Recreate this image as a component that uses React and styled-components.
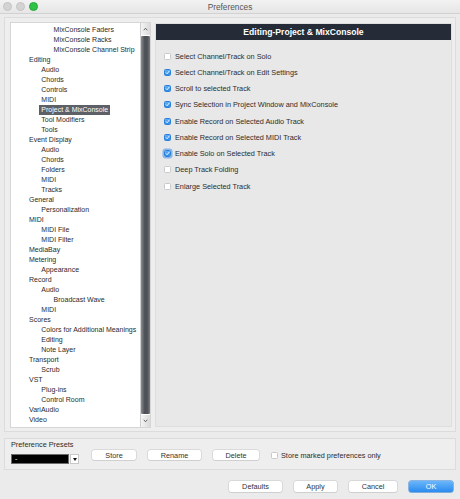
import React from "react";
import styled, { createGlobalStyle } from "styled-components";

const Global = createGlobalStyle`
  html, body { margin: 0; padding: 0; background: #ebebeb; }
  body { font-family: "Liberation Sans", Arial, sans-serif; }
  * { box-sizing: border-box; }
`;

const Window = styled.div`
  width: 460px;
  height: 499px;
  background: #ebebeb;
  display: flex;
  flex-direction: column;
  overflow: hidden;
  color: #2a2a2a;
`;

const TitleBar = styled.div`
  height: 14px;
  flex: none;
  position: relative;
  display: flex;
  align-items: center;
  justify-content: center;
  background: linear-gradient(#f2f2f2, #e6e6e6);
  border-bottom: 1px solid #d2d2d2;
`;

const Lights = styled.div`
  position: absolute;
  left: 3px;
  top: 2px;
  display: flex;
  gap: 4px;
`;

const Light = styled.span`
  width: 9px;
  height: 9px;
  border-radius: 50%;
  background: ${(p) => p.$c};
  border: 1px solid ${(p) => p.$b};
`;

const Title = styled.div`
  font-size: 8.3px;
  color: #555555;
  line-height: 10px;
`;

const MainFrame = styled.div`
  margin: 3px 4px 0;
  padding: 4px 3px 3px 5px;
  border: 1px solid #dcdcdc;
  background: #eeeeee;
  display: flex;
  gap: 4px;
  align-items: flex-start;
`;

const TreeBox = styled.div`
  display: flex;
  width: 141px;
  height: 406px;
  flex: none;
  border: 1px solid #d6d6d6;
  background: #ffffff;
`;

const TreeList = styled.div`
  flex: 1;
  padding-top: 2px;
  overflow: hidden;
`;

const TreeRow = styled.div`
  height: 10px;
  line-height: 10px;
  font-size: 7px;
  white-space: nowrap;
  padding-left: ${(p) => 18 + p.$level * 12.3}px;
`;

const TreeLabel = styled.span`
  display: inline-block;
  padding: 0 ${(p) => (p.$sel ? 2 : 0)}px;
  margin-left: ${(p) => (p.$sel ? -2 : 0)}px;
  background: ${(p) => (p.$sel ? "#5d6066" : "transparent")};
  color: ${(p) => (p.$sel ? "#ffffff" : "#2a2a2a")};
`;

const ScrollBar = styled.div`
  width: 10px;
  flex: none;
  display: flex;
  flex-direction: column;
  border-left: 1px solid #cfcfcf;
`;

const ScrollArrow = styled.div`
  height: 12px;
  flex: none;
  background: linear-gradient(90deg, #f4f4f4, #dadada);
  display: flex;
  align-items: center;
  justify-content: center;
`;

const ScrollThumb = styled.div`
  flex: 1;
  margin: 1px 0;
  background: linear-gradient(90deg, #8a8d92, #4e5258 40%, #4e5258 70%, #7a7d82);
  border-radius: 1px;
`;

const RightPanel = styled.div`
  width: 297px;
  height: 404px;
  margin-top: 1px;
  flex: none;
  display: flex;
  flex-direction: column;
  background: #e8e8e8;
  border: 1px solid #dedede;
`;

const Header = styled.div`
  height: 16px;
  flex: none;
  background: #252c38;
  color: #ffffff;
  font-weight: bold;
  font-size: 8.6px;
  display: flex;
  align-items: center;
  justify-content: center;
`;

const OptionList = styled.div`
  padding: 8px 0 0 8px;
  display: flex;
  flex-direction: column;
`;

const Option = styled.label`
  height: 16.25px;
  display: flex;
  align-items: center;
  gap: 4px;
  font-size: 7.3px;
  color: #2c2c2c;
`;

const Box = styled.span`
  width: 7px;
  height: 7px;
  flex: none;
  border-radius: 1.5px;
  display: flex;
  align-items: center;
  justify-content: center;
  background: ${(p) => (p.$on ? "linear-gradient(#5fb0f7, #2d8bea)" : "#ffffff")};
  border: 1px solid ${(p) => (p.$on ? "#2a7fd8" : "#c9c9c9")};
  box-shadow: ${(p) => (p.$focus ? "0 0 0 1.5px rgba(95,160,240,0.7)" : "none")};
`;

const Bottom = styled.div`
  margin: 6px 4px 0;
  height: 32px;
  border: 1px solid #dcdcdc;
  background: #eeeeee;
  display: flex;
  align-items: flex-start;
  padding: 2px 0 0 6px;
`;

const PresetCol = styled.div`
  display: flex;
  flex-direction: column;
  gap: 5px;
  margin-right: 13px;
`;

const SmallLabel = styled.div`
  font-size: 7.3px;
  line-height: 8px;
  color: #2c2c2c;
`;

const Dropdown = styled.div`
  display: flex;
  gap: 1px;
  height: 10px;
`;

const DropField = styled.div`
  width: 58px;
  background: #000000;
  color: #ffffff;
  font-size: 7px;
  line-height: 8px;
  padding-left: 3px;
  border: 1px solid #6a6a6a;
`;

const DropArrow = styled.div`
  width: 9px;
  background: #ffffff;
  border: 1px solid #c8c8c8;
  display: flex;
  align-items: center;
  justify-content: center;
`;

const ButtonRow = styled.div`
  display: flex;
  align-items: center;
  gap: 12px;
  margin-top: 9px;
`;

const Button = styled.div`
  width: ${(p) => p.$w}px;
  height: ${(p) => p.$h || 10}px;
  border-radius: 2px;
  background: ${(p) => (p.$primary ? "linear-gradient(#6ab6fa, #2b8bef)" : "#ffffff")};
  color: ${(p) => (p.$primary ? "#ffffff" : "#333333")};
  box-shadow: 0 0 0 0.5px ${(p) => (p.$primary ? "#2a7fd8" : "#c6c6c6")}, 0 1px 0 rgba(0, 0, 0, 0.08);
  font-size: 7.3px;
  display: flex;
  align-items: center;
  justify-content: center;
`;

const CheckWithText = styled.div`
  display: flex;
  align-items: center;
  gap: 3px;
  font-size: 7.3px;
  color: #2c2c2c;
`;

const Footer = styled.div`
  margin-top: 11px;
  padding-right: 7px;
  display: flex;
  justify-content: flex-end;
  gap: 12px;
`;

const tree = [
  ["MixConsole Faders", 2],
  ["MixConsole Racks", 2],
  ["MixConsole Channel Strip", 2],
  ["Editing", 0],
  ["Audio", 1],
  ["Chords", 1],
  ["Controls", 1],
  ["MIDI", 1],
  ["Project & MixConsole", 1, true],
  ["Tool Modifiers", 1],
  ["Tools", 1],
  ["Event Display", 0],
  ["Audio", 1],
  ["Chords", 1],
  ["Folders", 1],
  ["MIDI", 1],
  ["Tracks", 1],
  ["General", 0],
  ["Personalization", 1],
  ["MIDI", 0],
  ["MIDI File", 1],
  ["MIDI Filter", 1],
  ["MediaBay", 0],
  ["Metering", 0],
  ["Appearance", 1],
  ["Record", 0],
  ["Audio", 1],
  ["Broadcast Wave", 2],
  ["MIDI", 1],
  ["Scores", 0],
  ["Colors for Additional Meanings", 1],
  ["Editing", 1],
  ["Note Layer", 1],
  ["Transport", 0],
  ["Scrub", 1],
  ["VST", 0],
  ["Plug-ins", 1],
  ["Control Room", 1],
  ["VariAudio", 0],
  ["Video", 0],
];

const options = [
  ["Select Channel/Track on Solo", false],
  ["Select Channel/Track on Edit Settings", true],
  ["Scroll to selected Track", true],
  ["Sync Selection in Project Window and MixConsole", true],
  ["Enable Record on Selected Audio Track", true],
  ["Enable Record on Selected MIDI Track", true],
  ["Enable Solo on Selected Track", true, true],
  ["Deep Track Folding", false],
  ["Enlarge Selected Track", false],
];

const Check = () => (
  <svg width="5" height="5" viewBox="0 0 10 10">
    <path d="M2 5.3 L4.2 7.5 L8.2 2.5" fill="none" stroke="#fff" strokeWidth="1.8" strokeLinecap="round" strokeLinejoin="round" />
  </svg>
);

const Chevron = ({ up }) => (
  <svg width="5" height="4" viewBox="0 0 10 8">
    <path d={up ? "M1.5 6.5 L5 2.5 L8.5 6.5" : "M1.5 1.5 L5 5.5 L8.5 1.5"} fill="none" stroke="#444" strokeWidth="1.6" />
  </svg>
);

export default function App() {
  return (
    <>
      <Global />
      <Window>
        <TitleBar>
          <Lights>
            <Light $c="#d3d3d3" $b="#c4c4c4" />
            <Light $c="#d3d3d3" $b="#c4c4c4" />
            <Light $c="#2fc247" $b="#25a83a" />
          </Lights>
          <Title>Preferences</Title>
        </TitleBar>
        <MainFrame>
          <TreeBox>
            <TreeList>
              {tree.map(([label, level, sel], i) => (
                <TreeRow key={i} $level={level}>
                  <TreeLabel $sel={sel}>{label}</TreeLabel>
                </TreeRow>
              ))}
            </TreeList>
            <ScrollBar>
              <ScrollArrow>
                <Chevron up />
              </ScrollArrow>
              <ScrollThumb />
              <ScrollArrow>
                <Chevron />
              </ScrollArrow>
            </ScrollBar>
          </TreeBox>
          <RightPanel>
            <Header>Editing-Project &amp; MixConsole</Header>
            <OptionList>
              {options.map(([label, on, focus], i) => (
                <Option key={i}>
                  <Box $on={on} $focus={focus}>{on && <Check />}</Box>
                  {label}
                </Option>
              ))}
            </OptionList>
          </RightPanel>
        </MainFrame>
        <Bottom>
          <PresetCol>
            <SmallLabel>Preference Presets</SmallLabel>
            <Dropdown>
              <DropField>-</DropField>
              <DropArrow>
                <svg width="4" height="3" viewBox="0 0 8 6">
                  <path d="M0 0 L8 0 L4 6 Z" fill="#111" />
                </svg>
              </DropArrow>
            </Dropdown>
          </PresetCol>
          <ButtonRow>
            <Button $w={44}>Store</Button>
            <Button $w={53}>Rename</Button>
            <Button $w={46}>Delete</Button>
            <CheckWithText>
              <Box />
              Store marked preferences only
            </CheckWithText>
          </ButtonRow>
        </Bottom>
        <Footer>
          <Button $w={53} $h={11}>Defaults</Button>
          <Button $w={43} $h={11}>Apply</Button>
          <Button $w={48} $h={11}>Cancel</Button>
          <Button $w={44} $h={11} $primary>OK</Button>
        </Footer>
      </Window>
    </>
  );
}
